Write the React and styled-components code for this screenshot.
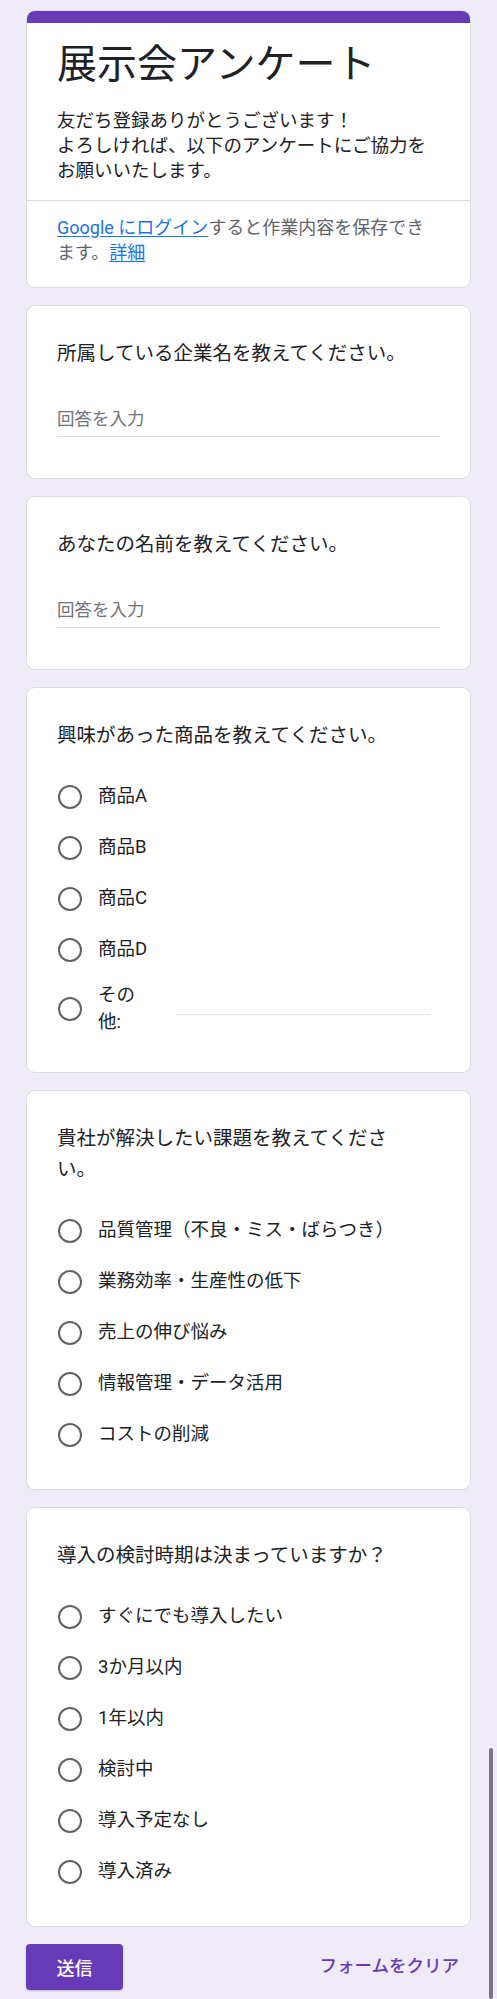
import styled, { createGlobalStyle } from "styled-components";

const GlobalStyle = createGlobalStyle`
  body {
    margin: 0;
    background: #efebf7;
    font-family: Roboto, "Noto Sans CJK JP", sans-serif;
    color: #202124;
  }
`;

const questions = [
  { id: "company", title: "所属している企業名を教えてください。", type: "text" },
  { id: "name", title: "あなたの名前を教えてください。", type: "text" },
  {
    id: "product",
    title: "興味があった商品を教えてください。",
    type: "radio",
    options: ["商品A", "商品B", "商品C", "商品D"],
    other: true,
  },
  {
    id: "issue",
    title: "貴社が解決したい課題を教えてください。",
    type: "radio",
    options: [
      "品質管理（不良・ミス・ばらつき）",
      "業務効率・生産性の低下",
      "売上の伸び悩み",
      "情報管理・データ活用",
      "コストの削減",
    ],
  },
  {
    id: "timing",
    title: "導入の検討時期は決まっていますか？",
    type: "radio",
    options: [
      "すぐにでも導入したい",
      "3か月以内",
      "1年以内",
      "検討中",
      "導入予定なし",
      "導入済み",
    ],
  },
];

export default function App() {
  return (
    <Page>
      <GlobalStyle />
      <HeaderCard>
        <TopBar />
        <HeaderBody>
          <Title>展示会アンケート</Title>
          <Description>
            友だち登録ありがとうございます！
            <br />
            よろしければ、以下のアンケートにご協力をお願いいたします。
          </Description>
        </HeaderBody>
        <LoginNote>
          <Link href="#">Google にログイン</Link>すると作業内容を保存できます。
          <Link href="#">詳細</Link>
        </LoginNote>
      </HeaderCard>

      {questions.map((q) => (
        <Card key={q.id}>
          <Question>{q.title}</Question>
          {q.type === "text" ? (
            <TextInput placeholder="回答を入力" />
          ) : (
            <Options>
              {q.options.map((opt) => (
                <Option key={opt}>
                  <Radio />
                  <Label>{opt}</Label>
                </Option>
              ))}
              {q.other && (
                <Option $tall>
                  <Radio />
                  <Label $narrow>その他:</Label>
                  <OtherLine />
                </Option>
              )}
            </Options>
          )}
        </Card>
      ))}

      <Footer>
        <SubmitButton type="button">送信</SubmitButton>
        <ClearLink href="#">フォームをクリア</ClearLink>
      </Footer>

      <ScrollThumb />
    </Page>
  );
}

const Page = styled.main`
  position: relative;
  min-height: 1999px;
  box-sizing: border-box;
  padding: 10px 26px 8px;
  display: flex;
  flex-direction: column;
  gap: 17px;
`;

const Card = styled.section`
  background: #fff;
  border: 1px solid #dadce0;
  border-radius: 9px;
  padding: 32px 30px 29px;
  display: flex;
  flex-direction: column;
`;

const HeaderCard = styled.section`
  background: #fff;
  border: 1px solid #dadce0;
  border-radius: 9px;
  overflow: hidden;
`;

const TopBar = styled.div`
  height: 13px;
  background: #673ab7;
  margin: -1px -1px 0;
`;

const HeaderBody = styled.div`
  padding: 16px 30px 16px;
  border-bottom: 1px solid #dadce0;
`;

const Title = styled.h1`
  margin: 0;
  font-size: 40px;
  font-weight: 400;
  line-height: 52px;
  color: #202124;
`;

const Description = styled.p`
  margin: 18px 0 0;
  font-size: 18.5px;
  line-height: 25px;
  color: #202124;
`;

const LoginNote = styled.p`
  margin: 0;
  padding: 14px 30px 22px;
  font-size: 18px;
  line-height: 25px;
  color: #5f6368;
`;

const Link = styled.a`
  color: #1a73e8;
  text-decoration: underline;
  text-underline-offset: 2px;
`;

const Question = styled.h2`
  margin: 0;
  max-width: 362px;
  font-size: 19.5px;
  font-weight: 400;
  line-height: 31px;
  color: #202124;
`;

const TextInput = styled.input`
  margin: 33px 0 12px;
  height: 34px;
  padding: 0;
  border: none;
  border-bottom: 1px solid #e0e0e0;
  outline: none;
  background: transparent;
  font-family: inherit;
  font-size: 17.5px;
  color: #202124;

  &::placeholder {
    color: #70757a;
  }
`;

const Options = styled.div`
  margin-top: 20px;
  display: flex;
  flex-direction: column;
`;

const Option = styled.label`
  display: flex;
  align-items: center;
  min-height: 51px;
  padding: ${(p) => (p.$tall ? "7px 0" : "0")};
`;

const Radio = styled.span`
  flex: none;
  width: 20px;
  height: 20px;
  border: 2px solid #5f6368;
  border-radius: 50%;
  margin-left: 1px;
`;

const Label = styled.span`
  margin-left: 16px;
  font-size: 18.5px;
  line-height: 27px;
  color: #202124;
  width: ${(p) => (p.$narrow ? "42px" : "auto")};
`;

const OtherLine = styled.span`
  flex: 1;
  margin: 0 10px 0 36px;
  align-self: center;
  height: 1px;
  background: #e0e0e0;
  transform: translateY(5px);
`;

const Footer = styled.div`
  display: flex;
  align-items: center;
  justify-content: space-between;
  padding-right: 12px;
`;

const SubmitButton = styled.button`
  width: 97px;
  height: 46px;
  border: none;
  border-radius: 4px;
  background: #673ab7;
  color: #fff;
  font-family: inherit;
  font-size: 18px;
  font-weight: 500;
  box-shadow: 0 1px 2px rgba(0, 0, 0, 0.2);
`;

const ClearLink = styled.a`
  color: #673ab7;
  font-size: 17.5px;
  font-weight: 500;
  text-decoration: none;
  transform: translateY(-3px);
`;

const ScrollThumb = styled.div`
  position: absolute;
  right: 4px;
  top: 1748px;
  bottom: 0;
  width: 4px;
  border-radius: 2px;
  background: #7b7684;
`;
